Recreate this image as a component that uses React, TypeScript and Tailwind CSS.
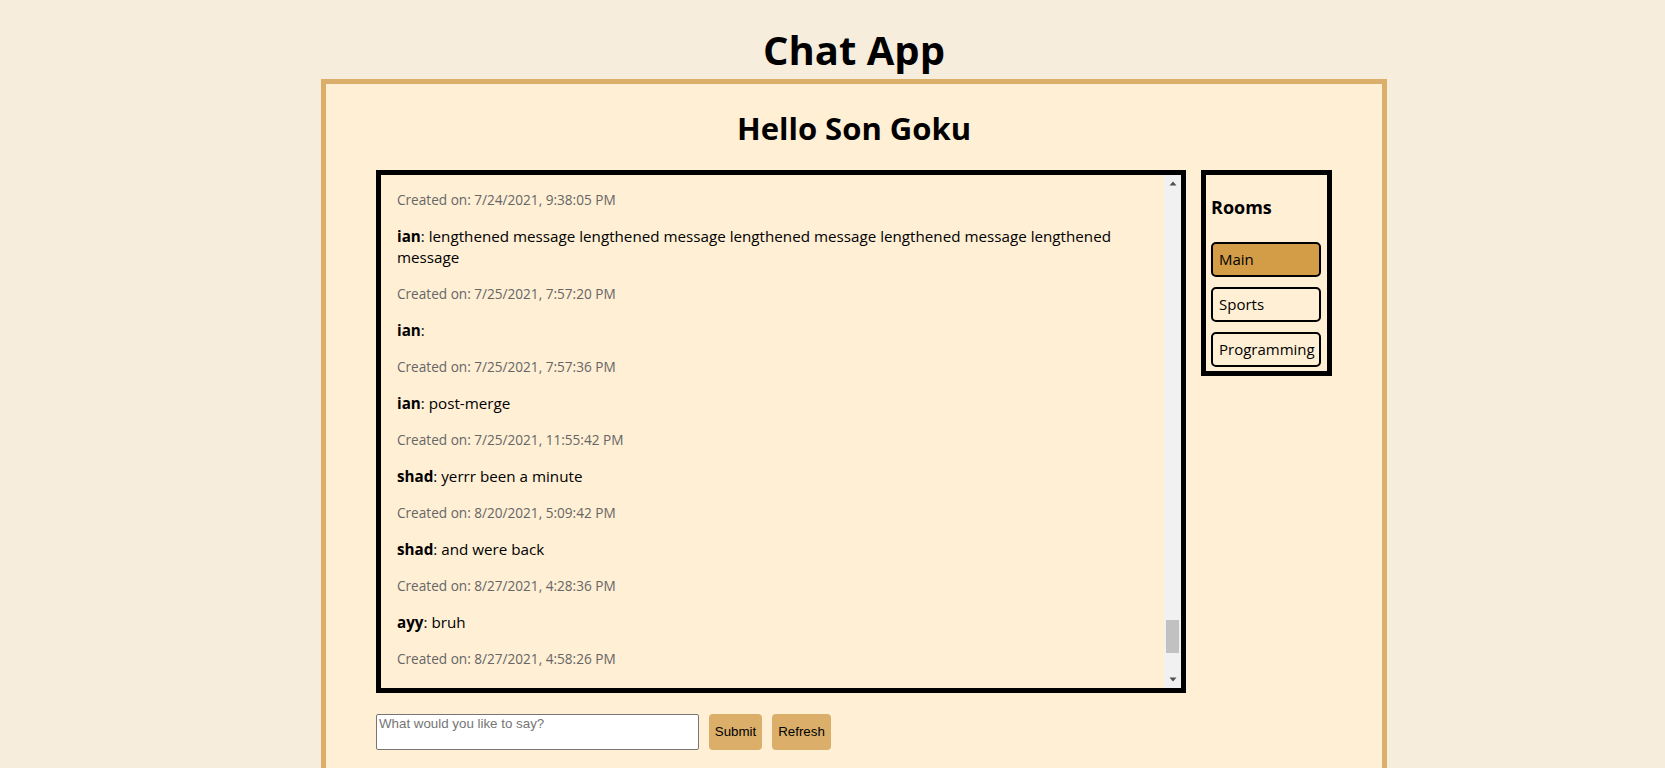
import React from "react";

type Msg = { user: string; text: string; created: string };

const messages: Msg[] = [
  { user: "ian", text: "hello there", created: "7/24/2021, 9:30:12 PM" },
  { user: "ian", text: "testing the main room", created: "7/24/2021, 9:38:05 PM" },
  {
    user: "ian",
    text: "lengthened message lengthened message lengthened message lengthened message lengthened message",
    created: "7/25/2021, 7:57:20 PM",
  },
  { user: "ian", text: "", created: "7/25/2021, 7:57:36 PM" },
  { user: "ian", text: "post-merge", created: "7/25/2021, 11:55:42 PM" },
  { user: "shad", text: "yerrr been a minute", created: "8/20/2021, 5:09:42 PM" },
  { user: "shad", text: "and were back", created: "8/27/2021, 4:28:36 PM" },
  { user: "ayy", text: "bruh", created: "8/27/2021, 4:58:26 PM" },
];

const rooms = ["Main", "Sports", "Programming"];

function ScrollArrow({ down }: { down?: boolean }) {
  return (
    <div className="flex h-[17px] items-center justify-center">
      <svg width="8" height="5" viewBox="0 0 8 5" className={down ? "rotate-180" : ""}>
        <path d="M4 0.5 L7.5 4.5 L0.5 4.5 Z" fill="#505050" />
      </svg>
    </div>
  );
}

export default function App() {
  return (
    <div className="min-h-screen bg-[#f6eddc] pl-[43px] pt-[30px] font-['Open_Sans',sans-serif] text-black">
      <h1 className="text-center text-[40px] font-bold leading-none">Chat App</h1>

      <main className="mx-auto mt-[9px] w-[1066px] border-[5px] border-[#dbaf6a] bg-[#ffefd5] pb-[40px]">
        <h2 className="pt-[29px] text-center text-[31px] font-bold leading-none">Hello Son Goku</h2>

        <div className="mt-[26px] flex items-start gap-[15px] px-[50px]">
          {/* messages */}
          <div className="flex h-[523px] w-[810px] border-[5px] border-black">
            <div className="flex flex-1 flex-col justify-end gap-[16px] overflow-hidden px-[16px] pb-[19px]">
              {messages.map((m, i) => (
                <React.Fragment key={i}>
                  {i > 0 && (
                    <p className="text-[15.2px] leading-[21px]">
                      <span className="font-bold">{m.user}</span>: {m.text}
                    </p>
                  )}
                  <p className="text-[13.6px] leading-[20px] text-[#666666]">Created on: {m.created}</p>
                </React.Fragment>
              ))}
            </div>
            <div className="flex w-[17px] flex-col bg-[#f1f1f1]">
              <ScrollArrow />
              <div className="flex flex-1 flex-col justify-end pb-[18px]">
                <div className="mx-[2px] h-[33px] bg-[#c1c1c1]" />
              </div>
              <ScrollArrow down />
            </div>
          </div>

          {/* rooms */}
          <aside className="w-[131px] border-[5px] border-black px-[5px] pb-[4px] pt-[20px]">
            <h3 className="text-[18px] font-bold leading-[25px]">Rooms</h3>
            <div className="mt-[22px] flex flex-col gap-[10px]">
              {rooms.map((r, i) => (
                <button
                  key={r}
                  className={
                    "h-[35px] w-[110px] whitespace-nowrap rounded-[5px] border-2 border-black pl-[6px] text-left text-[15px] " +
                    (i === 0 ? "bg-[#d39c47]" : "bg-transparent")
                  }
                >
                  {r}
                </button>
              ))}
            </div>
          </aside>
        </div>

        <form className="mt-[21px] flex gap-[10px] px-[50px] font-['Liberation_Sans',Arial,sans-serif]">
          <textarea
            placeholder="What would you like to say?"
            className="h-[36px] w-[323px] resize-none rounded-[2px] border border-[#767676] bg-white px-[2px] py-[1px] text-[13.33px] leading-[15px] placeholder:text-[#757575]"
          />
          <button type="button" className="h-[36px] w-[53px] rounded-[4px] bg-[#dbaf6a] text-[13.33px]">
            Submit
          </button>
          <button type="button" className="h-[36px] w-[59px] rounded-[4px] bg-[#dbaf6a] text-[13.33px]">
            Refresh
          </button>
        </form>
      </main>
    </div>
  );
}
